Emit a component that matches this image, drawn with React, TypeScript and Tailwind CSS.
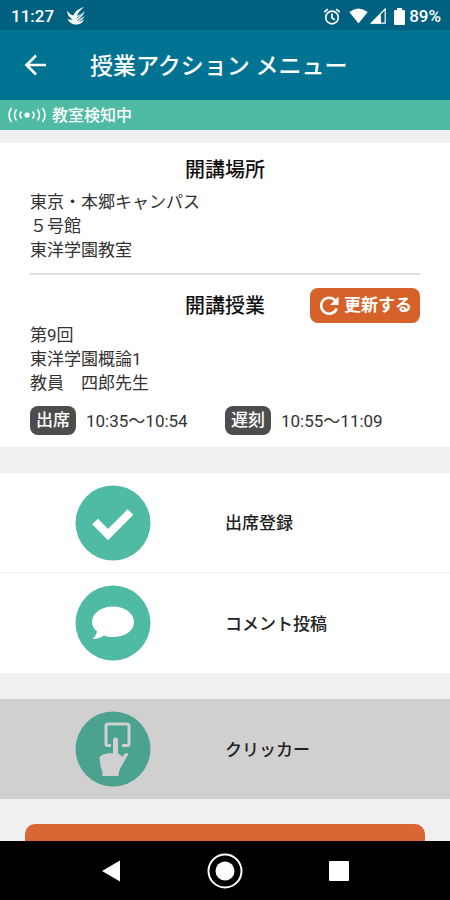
import React from 'react';

const LESSON_LINES = ['第9回', '東洋学園概論1', '教員　四郎先生'];
const PLACE_LINES = ['東京・本郷キャンパス', '５号館', '東洋学園教室'];
const PERIODS = [
  { label: '出席', time: '10:35〜10:54' },
  { label: '遅刻', time: '10:55〜11:09' },
];

const StatusBar: React.FC = () => (
  <div className="flex h-[30px] shrink-0 items-center justify-between bg-[#006080] pl-[11px] pr-[9px] pt-[2px] text-[17px] font-medium leading-none text-white">
    <div className="flex items-center gap-3">
      <span>11:27</span>
      <svg width="20" height="18" viewBox="0 0 20 18" fill="currentColor">
        <path d="M1 3.500C3 6.500 5 8 7.500 8.500C8.500 5 12 2 18 0C14 3.500 11.500 6 11 9C14 7.500 17 5.500 19 3.500C18 7.500 15.500 10 12.500 11.500C15 11 17 10 18.500 8.500C18 11.500 15 14 11.500 14.500C14 14.800 16 14 18 12.500C17 15.500 14 17.500 10 17.500C6 17.500 2.500 15 1.500 11.500C3 12.800 5 13 7 12.300C4.500 11.500 1.500 9 1 3.500Z" />
        <path d="M19 4L10.500 11.500M18.500 9L11 13.500" fill="none" stroke="#006080" strokeWidth=".8" />
      </svg>
    </div>
    <div className="flex items-center">
      <svg className="mr-2" width="18" height="17" viewBox="0 0 18 17" fill="none" stroke="currentColor" strokeWidth="1.700">
        <circle cx="9" cy="9.500" r="6.300" />
        <path d="M9 5.500v4.500l2.800 1.800M1.300 4.200l3.500-3M16.700 4.200l-3.500-3" />
      </svg>
      <svg className="mr-[2px]" width="19" height="16" viewBox="0 0 19 16" fill="currentColor">
        <path d="M.3 4Q9.500-3 18.700 4L9.500 15.500Z" />
      </svg>
      <svg className="mr-2" width="16" height="16" viewBox="0 0 16 16">
        <path d="M15.200 1v14.200H1.500Z" fill="none" stroke="currentColor" strokeWidth="1.200" />
        <path d="M11 5v10.500H.5Z" fill="currentColor" />
      </svg>
      <svg className="mr-1" width="11" height="17" viewBox="0 0 11 17" fill="currentColor">
        <path d="M3 0h5v2h2q1 0 1 1v13q0 1-1 1H1q-1 0-1-1V3q0-1 1-1h2Z" />
      </svg>
      <span>89%</span>
    </div>
  </div>
);

const Header: React.FC = () => (
  <header className="flex h-[70px] shrink-0 items-center bg-[#007393] text-white">
    <button type="button" aria-label="戻る" className="ml-6 mr-[43px]">
      <svg width="23" height="22" viewBox="0 0 23 22" fill="none" stroke="currentColor" strokeWidth="2.600">
        <path d="M22 11H3M12 1.500L2.500 11L12 20.500" />
      </svg>
    </button>
    <h1 className="pt-1 text-[23px] font-medium leading-8">授業アクション メニュー</h1>
  </header>
);

const DetectingBar: React.FC = () => (
  <div className="flex h-[30px] shrink-0 items-center gap-[6px] bg-[#4fbba5] pl-2 text-[16px] font-medium leading-6 text-white">
    <svg width="38" height="16" viewBox="0 0 38 16" fill="none" stroke="currentColor" strokeWidth="1.600">
      <circle cx="19" cy="8" r="2.600" fill="currentColor" stroke="none" />
      <path d="M3.500 1Q-1.500 8 3.500 15M8.500 2.500Q4.500 8 8.500 13.500M13.500 4.500Q10.500 8 13.500 11.500M34.500 1Q39.500 8 34.500 15M29.500 2.500Q33.500 8 29.500 13.500M24.500 4.500Q27.500 8 24.500 11.500" />
    </svg>
    <p className="pt-[2px]">教室検知中</p>
  </div>
);

const LessonCard: React.FC = () => (
  <section className="bg-white px-[30px] pb-3 pt-[15px]">
    <h2 className="text-center text-[20px] font-medium leading-6">開講場所</h2>
    <div className="mt-2 text-[17px] leading-6 text-[#333]">
      {PLACE_LINES.map((line) => <p key={line}>{line}</p>)}
    </div>
    <hr className="mt-[11px] border-t-2 border-[#dedede]" />
    <div className="mt-[13px] grid grid-cols-[1fr_auto_1fr] items-center">
      <h2 className="col-start-2 text-[20px] font-medium leading-6">開講授業</h2>
      <button type="button" className="flex h-[35px] items-center gap-1 justify-self-end rounded-lg bg-[#d66229] px-2 text-[17px] font-bold text-white">
        <svg width="22" height="22" viewBox="0 0 22 22">
          <path d="M17.500 5.800A8 8 0 1 0 18.700 13.500" fill="none" stroke="currentColor" strokeWidth="2.600" />
          <path d="M20.500 1.500v8.500H12Z" fill="currentColor" />
        </svg>
        更新する
      </button>
    </div>
    <div className="text-[17px] leading-6 text-[#333]">
      {LESSON_LINES.map((line) => <p key={line}>{line}</p>)}
    </div>
    <div className="mt-[11px] grid grid-cols-2">
      {PERIODS.map((p) => (
        <div key={p.label} className="flex items-center gap-[10px] text-[17px] text-[#333]">
          <span className="flex h-[29px] w-[46px] items-center justify-center rounded-lg bg-[#4d4d4d] font-medium text-white">{p.label}</span>
          <span className="whitespace-nowrap pt-[2px]">{p.time}</span>
        </div>
      ))}
    </div>
  </section>
);

const CheckIcon = () => (
  <svg width="76" height="76" viewBox="0 0 76 76">
    <circle cx="38" cy="38" r="37.500" fill="#4fbba5" />
    <path d="M20 36.500L33 49.500L55.500 27" fill="none" stroke="#fff" strokeWidth="8" />
  </svg>
);

const CommentIcon = () => (
  <svg width="76" height="76" viewBox="0 0 76 76">
    <circle cx="38" cy="38" r="37.500" fill="#4fbba5" />
    <path d="M38 21.500C49.500 21.500 59 28 59 37S49.500 52 38 52C34.500 52 31.500 51.500 29 50.500C26 52.500 22 54 17.500 54C20 51.500 21.500 49 22 46.500C19 44 17 40.800 17 37C17 28 26.500 21.500 38 21.500Z" fill="#fff" />
  </svg>
);

const ClickerIcon = () => (
  <svg width="76" height="76" viewBox="0 0 76 76">
    <circle cx="38" cy="38" r="37.500" fill="#4ba28f" />
    <path d="M36 34.500H32.500Q31 34.500 31 33V15Q31 13 33 13H52Q54 13 54 15V32.500Q54 34.500 52 34.500H47" fill="none" stroke="#d0d0d0" strokeWidth="3" />
    <path d="M38 29Q38 26.500 40.500 26.500T43 29V42.500Q46 43 47 46L50 42.500Q52 41.500 53.500 43L46 56Q43.500 60 43.500 65H27.500Q27.500 59 25.500 55L24.500 46.500Q25 44.500 27 44.500Q28 42.500 31 43Q33.500 41.500 38 42.500Z" fill="#d0d0d0" />
  </svg>
);

interface MenuRowProps {
  label: string;
  icon: React.ReactNode;
  disabled?: boolean;
}

const MenuRow: React.FC<MenuRowProps> = ({ label, icon, disabled }) => (
  <button
    type="button"
    disabled={disabled}
    className={`grid h-[100px] w-full grid-cols-2 items-center text-left text-[17px] font-medium text-[#222] ${disabled ? 'bg-[#d0d0d0]' : 'bg-white'}`}
  >
    <span className="flex justify-center">{icon}</span>
    <span className="pt-[3px]">{label}</span>
  </button>
);

const NavBar: React.FC = () => (
  <nav className="grid h-[59px] shrink-0 grid-cols-[1fr_auto_1fr] items-center gap-x-[58px] bg-black text-white">
    <button type="button" aria-label="バック" className="justify-self-end pr-7">
      <svg width="20" height="22" viewBox="0 0 20 22" fill="currentColor"><path d="M1 11L19 .5v21Z" /></svg>
    </button>
    <button type="button" aria-label="ホーム">
      <svg width="36" height="36" viewBox="0 0 36 36">
        <circle cx="18" cy="18" r="16.500" fill="none" stroke="currentColor" strokeWidth="2" />
        <circle cx="18" cy="18" r="9.500" fill="currentColor" />
      </svg>
    </button>
    <button type="button" aria-label="履歴" className="justify-self-start pl-7">
      <svg width="20" height="20" viewBox="0 0 20 20" fill="currentColor"><rect width="20" height="20" rx="1" /></svg>
    </button>
  </nav>
);

const App: React.FC = () => {
  return (
    <div className="flex h-screen flex-col bg-[#f0f0f0] font-[Roboto,'Noto_Sans_CJK_JP',sans-serif] text-[#111]">
      <StatusBar />
      <Header />
      <DetectingBar />
      <main className="min-h-0 flex-1 overflow-hidden pt-[13px]">
        <LessonCard />
        <div className="mt-[26px] divide-y divide-[#f0f0f0]">
          <MenuRow label="出席登録" icon={<CheckIcon />} />
          <MenuRow label="コメント投稿" icon={<CommentIcon />} />
        </div>
        <div className="mt-[26px]">
          <MenuRow label="クリッカー" icon={<ClickerIcon />} disabled />
        </div>
        <div className="px-[25px] pt-[25px]">
          <button type="button" aria-label="授業を終了" className="block h-14 w-full rounded-[10px] bg-[#d96735]" />
        </div>
      </main>
      <NavBar />
    </div>
  );
};

export default App;
